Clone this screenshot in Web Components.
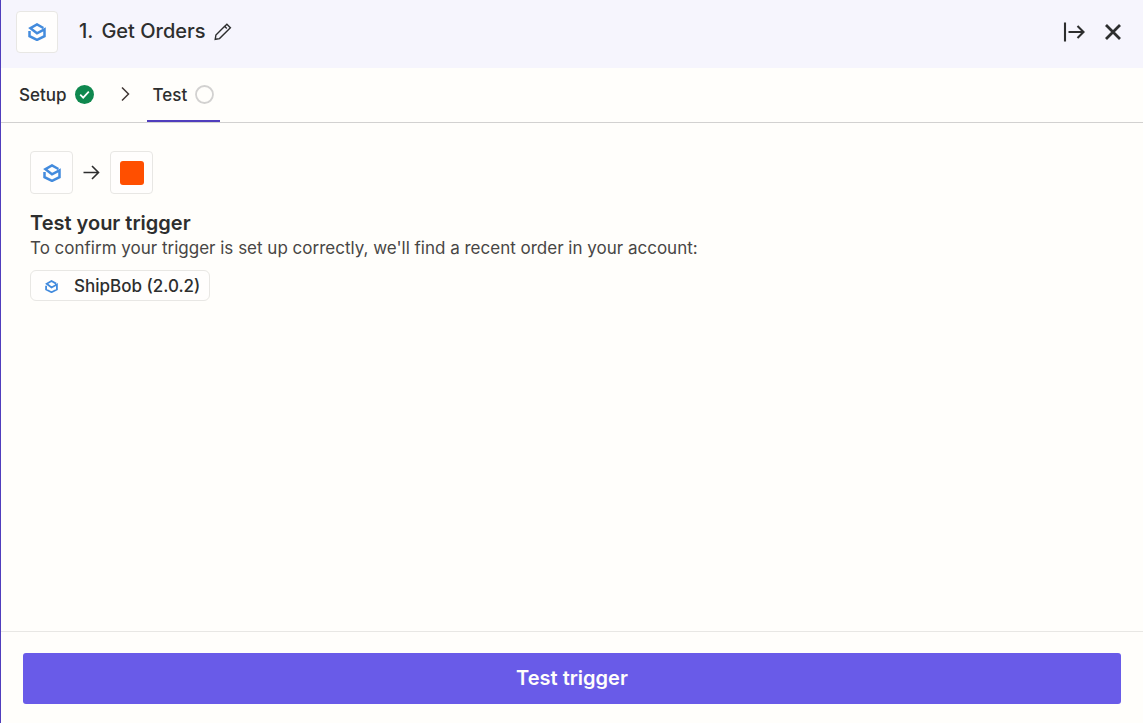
<!DOCTYPE html>
<html lang="en">
<head>
<meta charset="utf-8">
<meta name="viewport" content="width=device-width, initial-scale=1">
<title>Get Orders</title>
<style>
    body {
        margin: 0;
        font-family: Inter, "Liberation Sans", sans-serif;
        color: #2d2e2e;
        background: #fffefb;
    }
</style>
</head>
<body>
<step-panel>
    <step-header slot="header">
        <span slot="number">1.</span>
        <span>Get Orders</span>
    </step-header>
    <step-tabs slot="tabs"></step-tabs>
    <trigger-test>
        <span slot="title">Test your trigger</span>
        <span slot="text">To confirm your trigger is set up correctly, we'll find a recent order in your account:</span>
        <account-chip slot="account">ShipBob (2.0.2)</account-chip>
    </trigger-test>
    <step-footer slot="footer">Test trigger</step-footer>
</step-panel>

<script>
customElements.define('box-logo',
    class BoxLogo extends HTMLElement {
        constructor() {
            super();
            this.attachShadow({ mode: 'open' }).innerHTML = `
            <style>
                :host {
                    display: block;
                    width: 18px;
                    height: 18px;
                }

                svg {
                    display: block;
                    width: 100%;
                    height: 100%;
                }
            </style>
            <svg viewBox="0 0 18 18" fill="none" stroke="#438bdd" stroke-width="2.5" aria-hidden="true">
                <path d="M1.5 8v5.2L9 16.900l7.500-3.700V6.300L9 10.300 2.400 5.200 9 1.400l6.400 3.600"/>
            </svg>
            `;
        }
    }
);

customElements.define('app-tile',
    class AppTile extends HTMLElement {
        constructor() {
            super();
            this.attachShadow({ mode: 'open' }).innerHTML = `
            <style>
                :host {
                    display: flex;
                    align-items: center;
                    justify-content: center;
                    flex-shrink: 0;
                    box-sizing: border-box;
                    width: var(--tile-size, 43px);
                    height: var(--tile-size, 43px);
                    border: 1px solid #e8e7e4;
                    border-radius: 4px;
                    background: #fffefd;
                }
            </style>
            <slot></slot>
            `;
        }
    }
);

customElements.define('step-panel',
    class StepPanel extends HTMLElement {
        constructor() {
            super();
            this.attachShadow({ mode: 'open' }).innerHTML = `
            <style>
                :host {
                    display: flex;
                    flex-direction: column;
                    box-sizing: border-box;
                    min-height: 100vh;
                    border-left: 1px solid #503ebd;
                }

                main {
                    flex: 1;
                    padding: 28px 29px;
                }
            </style>
            <slot name="header"></slot>
            <slot name="tabs"></slot>
            <main><slot></slot></main>
            <slot name="footer"></slot>
            `;
        }
    }
);

customElements.define('step-header',
    class StepHeader extends HTMLElement {
        constructor() {
            super();
            this.attachShadow({ mode: 'open' }).innerHTML = `
            <style>
                :host {
                    display: block;
                    background: #f6f5fd;
                    --tile-size: 42px;
                }

                header {
                    display: flex;
                    align-items: center;
                    padding: 11px 18px 15px 15px;
                }

                h1 {
                    display: flex;
                    gap: 8px;
                    margin: 0 8px 0 21px;
                    padding-bottom: 2px;
                    font-size: 20px;
                    line-height: 24px;
                    font-weight: 500;
                }

                button {
                    display: flex;
                    padding: 0;
                    border: 0;
                    background: none;
                    color: inherit;
                    cursor: pointer;
                }

                .actions {
                    display: flex;
                    gap: 15px;
                    margin-left: auto;
                }
            </style>
            <header>
                <app-tile><box-logo></box-logo></app-tile>
                <h1><slot name="number"></slot><slot></slot></h1>
                <button type="button" aria-label="Rename step">
                    <svg width="18" height="18" viewBox="0 0 18 18" fill="none" stroke="currentColor" stroke-width="1.4">
                        <path d="M10.700 3.200L1.900 12l-.7 4.300 4.300-.7L16.400 4.700 12.900 1.200l-2.600 2.600M10.600 3.300l2.200 2.200"/>
                    </svg>
                </button>
                <div class="actions">
                    <button type="button" aria-label="Collapse panel">
                        <svg width="24" height="24" viewBox="0 0 24 24" fill="none" stroke="currentColor" stroke-width="2.1">
                            <path d="M3 2.500v19M6.500 12h15M15.500 6l6 6-6 6"/>
                        </svg>
                    </button>
                    <button type="button" aria-label="Close">
                        <svg width="24" height="24" viewBox="0 0 24 24" fill="none" stroke="currentColor" stroke-width="2.8">
                            <path d="M5 5l14 14M19 5L5 19"/>
                        </svg>
                    </button>
                </div>
            </header>
            `;
        }
    }
);

customElements.define('step-tabs',
    class StepTabs extends HTMLElement {
        constructor() {
            super();
            this.attachShadow({ mode: 'open' }).innerHTML = `
            <style>
                :host {
                    display: block;
                    border-bottom: 1px solid #d2d1d0;
                }

                nav {
                    display: flex;
                    align-items: stretch;
                    height: 54px;
                    padding: 0 12px;
                }

                button {
                    display: flex;
                    align-items: center;
                    gap: 8px;
                    padding: 1px 6px 0;
                    border: 0;
                    border-bottom: 2px solid transparent;
                    background: none;
                    color: inherit;
                    font: 500 17px/24px Inter, "Liberation Sans", sans-serif;
                    cursor: pointer;
                }

                button[aria-current] {
                    border-bottom-color: #503ebd;
                }

                .next {
                    align-self: center;
                    margin: 0 16px 2px 19px;
                }
            </style>
            <nav aria-label="Steps">
                <button type="button">
                    Setup
                    <svg width="19" height="19" viewBox="0 0 19 19" aria-label="Complete">
                        <circle cx="9.5" cy="9.5" r="9.5" fill="#0f884e"/>
                        <path d="M5.2 9.7l3 3 5.6-6" fill="none" stroke="#fff" stroke-width="1.7"/>
                    </svg>
                </button>
                <svg class="next" width="12" height="18" viewBox="0 0 12 18" fill="none" stroke="#413735" stroke-width="1.5" aria-hidden="true">
                    <path d="M3 2.500L9.500 9 3 15.500"/>
                </svg>
                <button type="button" aria-current="step">
                    Test
                    <svg width="19" height="19" viewBox="0 0 19 19" aria-label="Not started">
                        <circle cx="9.5" cy="9.5" r="8.5" fill="none" stroke="#d2d1d0" stroke-width="1.8"/>
                    </svg>
                </button>
            </nav>
            `;
        }
    }
);

customElements.define('account-chip',
    class AccountChip extends HTMLElement {
        constructor() {
            super();
            this.attachShadow({ mode: 'open' }).innerHTML = `
            <style>
                :host {
                    display: inline-flex;
                    align-items: center;
                    gap: 16px;
                    padding: 2px 9px 1px 14px;
                    border: 1px solid #e8e7e4;
                    border-radius: 6px;
                    background: #fffefd;
                    font-size: 17px;
                    line-height: 26px;
                    font-weight: 500;
                }

                box-logo {
                    width: 13px;
                    height: 13px;
                }
            </style>
            <box-logo></box-logo>
            <span><slot></slot></span>
            `;
        }
    }
);

customElements.define('trigger-test',
    class TriggerTest extends HTMLElement {
        constructor() {
            super();
            this.attachShadow({ mode: 'open' }).innerHTML = `
            <style>
                :host {
                    display: block;
                }

                .apps {
                    display: flex;
                    align-items: center;
                    gap: 10px;
                }

                .square {
                    width: 24px;
                    height: 24px;
                    border-radius: 3px;
                    background: #ff4f00;
                }

                h2 {
                    margin: 16px 0 0;
                    font-size: 20px;
                    line-height: 26px;
                    font-weight: 600;
                }

                p {
                    margin: 0 0 10px;
                    font-size: 17px;
                    line-height: 24px;
                    color: #484645;
                }

                .account {
                    display: flex;
                }
            </style>
            <div class="apps">
                <app-tile><box-logo></box-logo></app-tile>
                <svg width="17" height="18" viewBox="0 0 17 18" fill="none" stroke="currentColor" stroke-width="1.6" aria-hidden="true">
                    <path d="M.5 8.500h15M9 2l6.500 6.500L9 15"/>
                </svg>
                <app-tile><div class="square"></div></app-tile>
            </div>
            <h2><slot name="title"></slot></h2>
            <p><slot name="text"></slot></p>
            <div class="account"><slot name="account"></slot></div>
            `;
        }
    }
);

customElements.define('step-footer',
    class StepFooter extends HTMLElement {
        constructor() {
            super();
            this.attachShadow({ mode: 'open' }).innerHTML = `
            <style>
                :host {
                    display: block;
                    padding: 21px 22px 19px;
                    border-top: 1px solid #e8e7e4;
                }

                button {
                    display: block;
                    width: 100%;
                    padding: 13px;
                    border: 0;
                    border-radius: 3px;
                    background: #695be8;
                    color: #fffefb;
                    font: 600 20px/25px Inter, "Liberation Sans", sans-serif;
                    cursor: pointer;
                }
            </style>
            <button type="button"><slot></slot></button>
            `;
        }
    }
);
</script>
</body>
</html>
